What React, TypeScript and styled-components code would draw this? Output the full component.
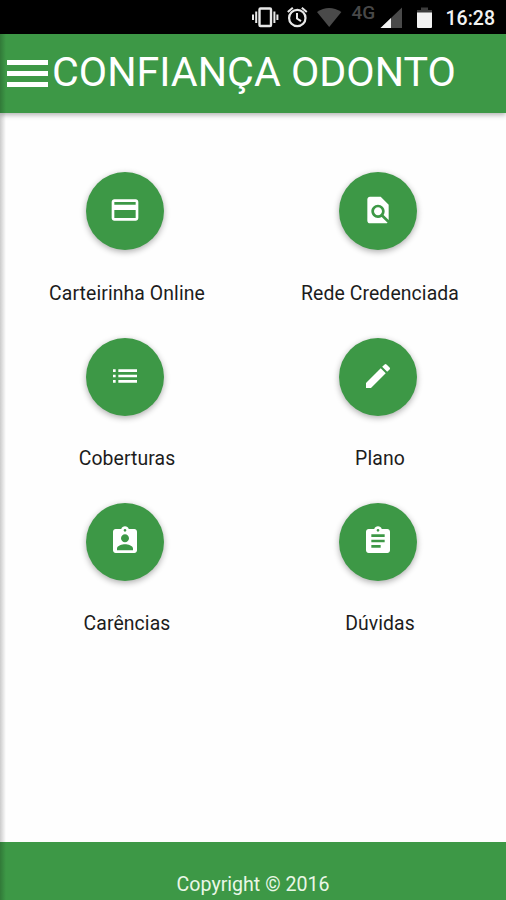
import React from 'react';
import { MdAssignment, MdAssignmentInd, MdCreditCard, MdEdit, MdFindInPage, MdList } from 'react-icons/md';
import styled, { createGlobalStyle } from 'styled-components';

const GREEN = '#3d9846';

const GlobalStyle = createGlobalStyle`
    * {
        box-sizing: border-box;
    }
    body {
        margin: 0;
        background: #fff;
        font-family: Roboto, "Liberation Sans", sans-serif;
    }
`;

const Screen = styled.div`
    position: relative;
    display: flex;
    flex-direction: column;
    width: 506px;
    height: 900px;
    overflow: hidden;
    background: #fefefe;
`;

const StatusBar = styled.div`
    display: flex;
    flex: none;
    justify-content: flex-end;
    height: 34px;
    padding-right: 11px;
    background: #000;
    color: #f2f2f2;
`;

const StatusIcons = styled.svg`
    flex: none;
    width: 192px;
    height: 34px;
`;

const Clock = styled.span`
    width: 51px;
    padding-top: 6px;
    font-size: 19.5px;
    font-weight: 500;
    line-height: 25px;
    text-align: right;
    white-space: nowrap;
`;

const Header = styled.header`
    display: flex;
    flex: none;
    align-items: center;
    height: 79px;
    padding: 0 7px;
    background: ${GREEN};
    box-shadow: 0 2px 5px rgba(0, 0, 0, 0.3);
`;

const MenuButton = styled.button`
    display: flex;
    flex-direction: column;
    gap: 6px;
    width: 41px;
    margin-right: 3px;
    padding: 0;
    border: 0;
    background: none;
`;

const MenuLine = styled.span`
    height: 5px;
    background: #fff;
`;

const Title = styled.h1`
    margin: 0;
    padding: 0 0 4px 1px;
    color: #fff;
    font-size: 41.2px;
    font-weight: 400;
    line-height: 48px;
    white-space: nowrap;
`;

const Menu = styled.main`
    display: grid;
    flex: 1;
    grid-template-columns: 1fr 1fr;
    grid-auto-rows: 165.3px;
    padding-top: 59.3px;
`;

const Item = styled.div`
    display: flex;
    flex-direction: column;
    align-items: center;
`;

const RoundButton = styled.button`
    display: flex;
    align-items: center;
    justify-content: center;
    width: 78px;
    height: 78px;
    margin-right: 4px;
    padding: 0 0 2px;
    border: 0;
    border-radius: 50%;
    background: ${GREEN};
    box-shadow: 0 2px 6px rgba(0, 0, 0, 0.32);
    color: #fff;
    font-size: 32px;
`;

const Label = styled.span`
    margin-top: 31.6px;
    padding-left: 1px;
    color: #1c1c1c;
    font-size: 19.4px;
    letter-spacing: 0.1px;
    line-height: 24px;
`;

const Footer = styled.footer`
    flex: none;
    height: 58px;
    padding-top: 31px;
    background: ${GREEN};
    color: #eaf7e6;
    font-size: 19.6px;
    line-height: 24px;
    text-align: center;
`;

// shadow of the closed drawer, over the left edge of the page
const DrawerShadow = styled.div`
    position: absolute;
    top: 34px;
    bottom: 0;
    left: 0;
    width: 6px;
    background: linear-gradient(to right, rgba(0, 0, 0, 0.2), rgba(0, 0, 0, 0));
`;

const items = [
    { label: 'Carteirinha Online', icon: <MdCreditCard /> },
    { label: 'Rede Credenciada', icon: <MdFindInPage /> },
    { label: 'Coberturas', icon: <MdList /> },
    { label: 'Plano', icon: <MdEdit /> },
    { label: 'Carências', icon: <MdAssignmentInd /> },
    { label: 'Dúvidas', icon: <MdAssignment /> },
];

const DeviceStatus: React.FC = () => (
    <StatusIcons viewBox="252 0 192 34">
        <g fill="none" stroke="#e8e8e8" strokeWidth="2">
            <rect x="259.5" y="8.5" width="11.5" height="17.5" rx="1" strokeWidth="2.4" />
            <path d="M256.2 11.5v11.5M274.4 11.5v11.5M253 14.5v5.5M277.4 14.5v5.5" />
            <circle cx="297.3" cy="18" r="8.2" strokeWidth="2.2" />
            <path d="M297 13v5.5l4 2.7M287.8 12l5-4.3M306.8 12l-5-4.3" />
        </g>
        <path d="M317 12q12-8 24.4 0L329.2 27z" fill="#4a4a4a" />
        <text x="351.5" y="19" fill="#484848" fontSize="19" fontWeight="500">4G</text>
        <path d="M402 7.5V28h-21.5z" fill="#4a4a4a" />
        <path d="M391 18v10h-10.5z" fill="#f2f2f2" />
        <path d="M421 7.5h7v2.5h4v3h-15v-3h4z" fill="#3c3c3c" />
        <path d="M417 12.5h15V27q0 1-1 1h-13q-1 0-1-1z" fill="#f2f2f2" />
    </StatusIcons>
);

const App: React.FC = () => {
    return (
        <Screen>
            <GlobalStyle />
            <StatusBar>
                <DeviceStatus />
                <Clock>16:28</Clock>
            </StatusBar>

            <Header>
                <MenuButton aria-label="Menu">
                    <MenuLine />
                    <MenuLine />
                    <MenuLine />
                </MenuButton>
                <Title>CONFIANÇA ODONTO</Title>
            </Header>

            <Menu>
                {items.map(item => (
                    <Item key={item.label}>
                        <RoundButton>{item.icon}</RoundButton>
                        <Label>{item.label}</Label>
                    </Item>
                ))}
            </Menu>

            <Footer>Copyright © 2016</Footer>
            <DrawerShadow />
        </Screen>
    );
}

export default App;
